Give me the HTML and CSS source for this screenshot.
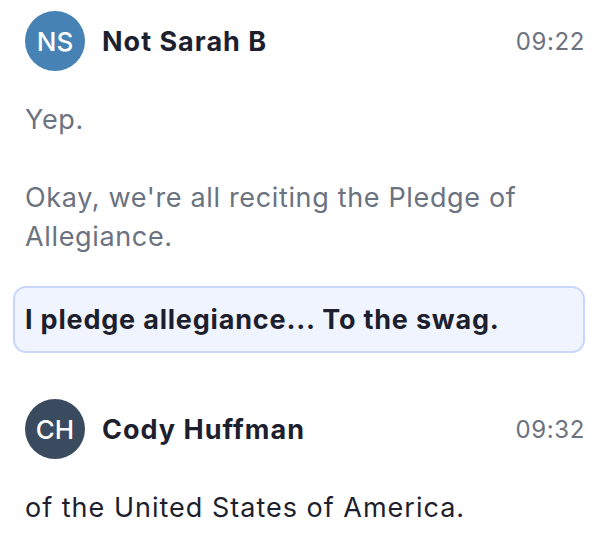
FILE: index.html
```
<!DOCTYPE html>
<html>
<head>
<meta charset="utf-8">
<link rel="stylesheet" href="styles.css">
</head>
<body>
<div class="chat">
  <div class="group">
    <div class="header">
      <div class="avatar ns">NS</div>
      <div class="name">Not Sarah B</div>
      <div class="time">09:22</div>
    </div>
    <p class="msg muted">Yep.</p>
    <p class="msg muted">Okay, we're all reciting the Pledge of Allegiance.</p>
    <p class="msg highlight">I pledge allegiance... To the swag.</p>
  </div>
  <div class="group">
    <div class="header">
      <div class="avatar ch">CH</div>
      <div class="name">Cody Huffman</div>
      <div class="time">09:32</div>
    </div>
    <p class="msg strong">of the United States of America.</p>
  </div>
</div>
</body>
</html>
```
FILE: styles.css
```
html, body {
  margin: 0;
  padding: 0;
  background: #ffffff;
}
body {
  font-family: Inter, "Noto Sans", sans-serif;
  color: #1e1f2e;
}
.chat {
  padding: 11px 21px 0 25px;
}
.group + .group {
  margin-top: 46px;
}
.header {
  display: flex;
  align-items: center;
  height: 60px;
}
.avatar {
  width: 60px;
  height: 60px;
  border-radius: 50%;
  color: #ffffff;
  font-size: 26px;
  font-weight: 500;
  display: flex;
  align-items: center;
  justify-content: center;
  flex-shrink: 0;
}
.avatar.ns { background: #4682b4; }
.avatar.ch { background: #3a4b5f; }
.name {
  margin-left: 17px;
  font-size: 27px;
  font-weight: 700;
  color: #1e1f2e;
  flex: 1;
  letter-spacing: 1px;
}
.time {
  font-size: 24px;
  color: #6b7280;
  letter-spacing: 0.6px;
}
.msg {
  margin: 29px 0 0 0;
  font-size: 27px;
  line-height: 39px;
  letter-spacing: 0.65px;
}
.msg + .msg {
  margin-top: 39px;
}
.muted {
  color: #6b7280;
}
.msg.strong {
  color: #1e1f2e;
  letter-spacing: 1px;
}
.msg.highlight {
  margin-top: 30px;
  margin-left: -12px;
  padding: 12px 10px;
  border: 2px solid #c9d6fb;
  border-radius: 13px;
  background: #eff4ff;
  font-weight: 700;
  color: #1e1f2e;
  letter-spacing: 0.8px;
}
```
